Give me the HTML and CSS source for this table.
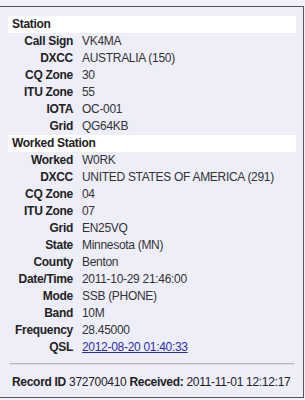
FILE: index.html
```html
<!DOCTYPE html>
<html lang="en">
<head>
    <meta charset="UTF-8">
    <meta name="viewport" content="width=device-width, initial-scale=1.0">
    <title>QSO Details</title>
    <link rel="stylesheet" href="styles.css">
</head>
<body>
    <div class="qso">
        <table class="details">
            <tr class="head"><th colspan="2">Station</th></tr>
            <tr><td class="lbl">Call Sign</td><td>VK4MA</td></tr>
            <tr><td class="lbl">DXCC</td><td>AUSTRALIA (150)</td></tr>
            <tr><td class="lbl">CQ Zone</td><td>30</td></tr>
            <tr><td class="lbl">ITU Zone</td><td>55</td></tr>
            <tr><td class="lbl">IOTA</td><td>OC-001</td></tr>
            <tr><td class="lbl">Grid</td><td>QG64KB</td></tr>

            <tr class="head"><th colspan="2">Worked Station</th></tr>
            <tr><td class="lbl">Worked</td><td>W0RK</td></tr>
            <tr><td class="lbl">DXCC</td><td>UNITED STATES OF AMERICA (291)</td></tr>
            <tr><td class="lbl">CQ Zone</td><td>04</td></tr>
            <tr><td class="lbl">ITU Zone</td><td>07</td></tr>
            <tr><td class="lbl">Grid</td><td>EN25VQ</td></tr>
            <tr><td class="lbl">State</td><td>Minnesota (MN)</td></tr>
            <tr><td class="lbl">County</td><td>Benton</td></tr>
            <tr><td class="lbl">Date/Time</td><td>2011-10-29 21:46:00</td></tr>
            <tr><td class="lbl">Mode</td><td>SSB (PHONE)</td></tr>
            <tr><td class="lbl">Band</td><td>10M</td></tr>
            <tr><td class="lbl">Frequency</td><td>28.45000</td></tr>
            <tr><td class="lbl">QSL</td><td><a href="#">2012-08-20 01:40:33</a></td></tr>
        </table>
        <hr>
        <div class="record"><b>Record ID</b> 372700410 <b>Received:</b> 2011-11-01 12:12:17</div>
    </div>
</body>
</html>
```

FILE: styles.css
```css
body { margin: 0; padding-top: 6px; background: #f1f1fb; font-family: "Liberation Sans", Arial, sans-serif; font-size: 12px; letter-spacing: -0.3px; color: #222; }
.qso { width: 288px; padding: 9px 7px 0 8px; height: 381px; background: #eeeef9; border: 1px solid #555; border-left: none; }
.details { width: 100%; border-collapse: collapse; }
.details tr { height: 17px; }
.details td { padding: 0; line-height: 17px; color: #333; white-space: nowrap; }
.details th { background: #fff; text-align: left; padding: 0 4px; line-height: 17px; color: #222; }
.details td.lbl { width: 65px; padding-right: 9px; text-align: right; font-weight: bold; color: #222; }
a { color: #2b2fa8; }
hr { margin: 7px 2px 0 2px; height: 0; border: none; border-top: 1px solid #b4b4bc; border-bottom: 1px solid #dcdce4; }
.record { padding: 10px 4px 0 4px; color: #222; }
```
